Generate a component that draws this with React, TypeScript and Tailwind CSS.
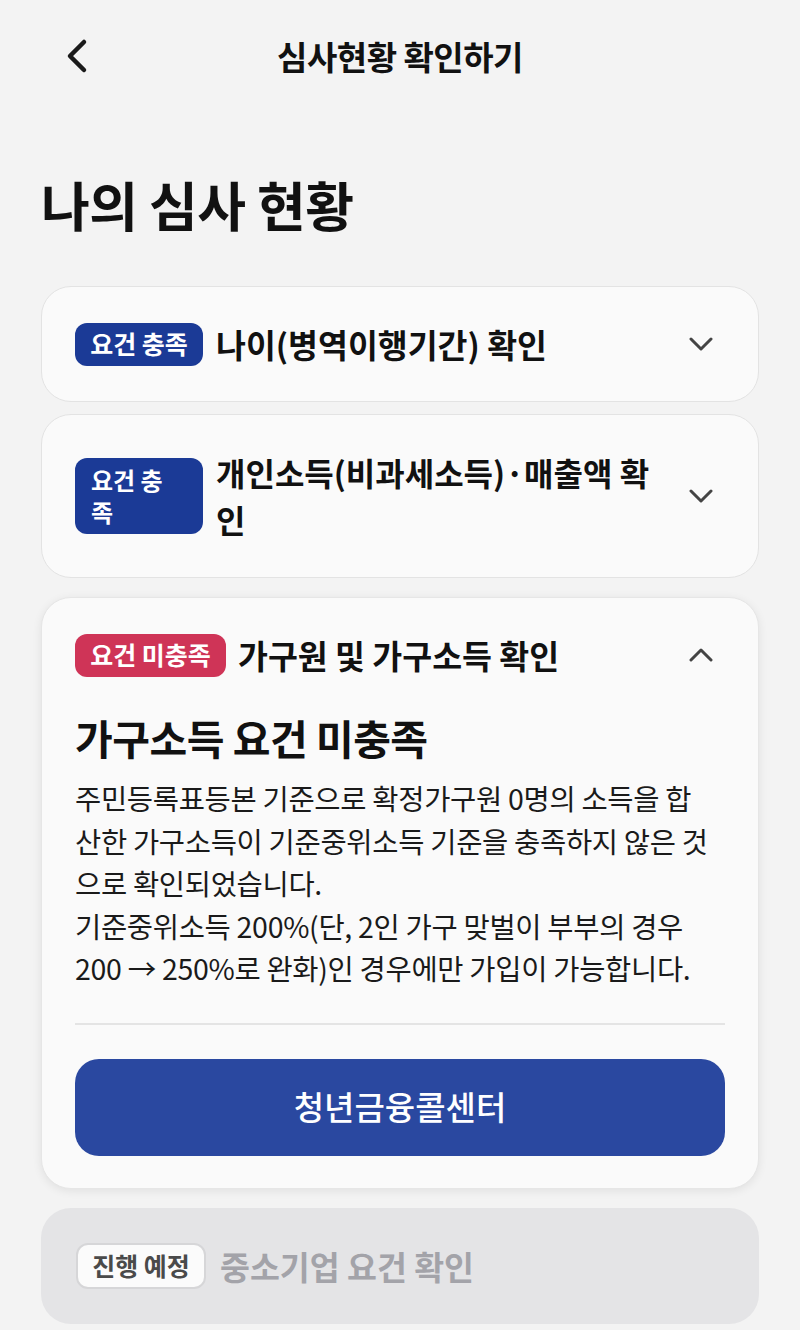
import React from 'react';

const FONT = { fontFamily: '"Noto Sans CJK KR", "Noto Sans", sans-serif' };

const ChevronDown = ({ up = false }: { up?: boolean }) => (
  <svg width="24" height="14" viewBox="0 0 24 14" fill="none" className={up ? 'rotate-180' : ''}>
    <path d="M2 2l10 10L22 2" stroke="#444444" strokeWidth="3" strokeLinecap="round" strokeLinejoin="round" />
  </svg>
);

const BackIcon = () => (
  <svg width="24" height="36" viewBox="0 0 24 36" fill="none">
    <path d="M19 4L5 18l14 14" stroke="#1a1a1a" strokeWidth="4.5" strokeLinecap="round" strokeLinejoin="round" />
  </svg>
);

const bodyLines = [
  '주민등록표등본 기준으로 확정가구원 0명의 소득을 합',
  '산한 가구소득이 기준중위소득 기준을 충족하지 않은 것',
  '으로 확인되었습니다.',
  '기준중위소득 200%(단, 2인 가구 맞벌이 부부의 경우',
  '200 → 250%로 완화)인 경우에만 가입이 가능합니다.',
];

export default function App() {
  return (
    <div className="min-h-[1330px] w-[800px] bg-[#f3f3f3] text-[#111111]" style={FONT}>
      {/* Header */}
      <div className="relative flex h-[114px] items-center justify-center">
        <div className="absolute left-[65px] top-[38px]">
          <BackIcon />
        </div>
        <h1 className="text-[33px] font-bold tracking-[-0.5px]">심사현황 확인하기</h1>
      </div>

      <div className="px-[41px]">
        <h2 className="mt-[53px] mb-[45px] text-[53px] font-bold leading-[1.4] tracking-[-0.5px]">나의 심사 현황</h2>

        {/* Card 1 */}
        <div className="flex items-center rounded-[30px] border border-[#e3e3e3] bg-[#fafafa] py-[33px] pl-[33px] pr-[45px]">
          <span className="flex h-[43px] w-[128px] items-center justify-center rounded-[12px] bg-[#1b3a96] text-[25px] font-bold text-white">
            요건 충족
          </span>
          <span className="ml-[13px] flex-1 text-[32.5px] font-bold leading-[48px]">나이(병역이행기간) 확인</span>
          <ChevronDown />
        </div>

        {/* Card 2 */}
        <div className="mt-[12px] flex items-center rounded-[30px] border border-[#e3e3e3] bg-[#fafafa] py-[34px] pl-[33px] pr-[45px]">
          <span className="flex h-[76px] w-[128px] flex-col justify-center rounded-[12px] bg-[#1b3a96] px-[16px] text-[24px] font-bold leading-[32px] text-white">
            <span>요건 충</span>
            <span>족</span>
          </span>
          <span className="ml-[13px] flex flex-1 flex-col text-[32px] font-bold leading-[47px]">
            <span>개인소득(비과세소득)·매출액 확</span>
            <span>인</span>
          </span>
          <ChevronDown />
        </div>

        {/* Card 3 - expanded */}
        <div className="mt-[19px] rounded-[30px] border border-[#e6e6e6] bg-[#fafafa] px-[33px] pt-[33px] pb-[32px] shadow-[0_2px_10px_rgba(0,0,0,0.08)]">
          <div className="flex items-center pr-[12px]">
            <span className="flex h-[43px] w-[151px] items-center justify-center rounded-[12px] bg-[#cf3457] text-[25px] font-bold text-white">
              요건 미충족
            </span>
            <span className="ml-[12px] flex-1 text-[32.5px] font-bold leading-[48px]">가구원 및 가구소득 확인</span>
            <ChevronDown up />
          </div>

          <h3 className="mt-[32px] text-[41px] font-bold leading-[52px] tracking-[-0.5px]">가구소득 요건 미충족</h3>
          <div className="mt-[14px] text-[28.5px] leading-[42.5px] tracking-[-0.3px] text-[#1a1a1a]">
            {bodyLines.map((line) => (
              <div key={line} className="whitespace-nowrap">
                {line}
              </div>
            ))}
          </div>

          <div className="mt-[33px] h-[2px] bg-[#e4e4e4]" />

          <button className="mt-[34px] flex h-[97px] w-full items-center justify-center rounded-[24px] bg-[#2a48a0] text-[33px] font-medium text-white">
            청년금융콜센터
          </button>
        </div>

        {/* Card 4 - pending */}
        <div className="mt-[19px] flex items-center rounded-[30px] bg-[#e4e4e6] py-[34px] pl-[35px] pr-[45px]">
          <span className="flex h-[46px] w-[130px] items-center justify-center rounded-[12px] border-2 border-[#d6d6d8] bg-[#fbfbfb] text-[25px] font-bold text-[#4a4a4a]">
            진행 예정
          </span>
          <span className="ml-[14px] text-[32.5px] font-bold leading-[48px] text-[#a3a3a9]">중소기업 요건 확인</span>
        </div>
      </div>
    </div>
  );
}
